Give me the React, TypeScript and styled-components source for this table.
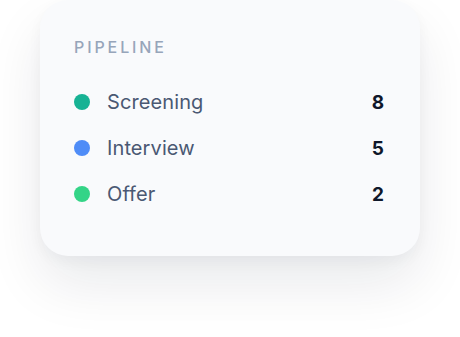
import React from 'react';
import styled, { createGlobalStyle } from 'styled-components';

const stages = [
  { label: 'Screening', count: 8, color: '#17b294' },
  { label: 'Interview', count: 5, color: '#4f8cf7' },
  { label: 'Offer', count: 2, color: '#34d487' },
];

const App: React.FC = () => (
  <Page>
    <GlobalStyle />
    <Card>
      <Title>Pipeline</Title>
      <List>
        {stages.map(s => (
          <Row key={s.label}>
            <Dot color={s.color} />
            <Label>{s.label}</Label>
            <Count>{s.count}</Count>
          </Row>
        ))}
      </List>
    </Card>
  </Page>
);

const GlobalStyle = createGlobalStyle`
  body {
    margin: 0;
    background: #ffffff;
    font-family: Inter, 'Noto Sans', sans-serif;
  }
`;

const Page = styled.div`
  min-height: 337px;
  padding: 0 40px;
`;

const Card = styled.div`
  box-sizing: border-box;
  width: 380px;
  height: 256px;
  padding: 36px 36px 0 34px;
  background: #f9fafc;
  border-radius: 28px;
  box-shadow: 0 28px 56px rgba(15, 23, 42, 0.09), 0 6px 14px rgba(15, 23, 42, 0.04);
`;

const Title = styled.div`
  font-size: 16px;
  line-height: 22px;
  font-weight: 500;
  letter-spacing: 2.9px;
  text-transform: uppercase;
  color: #97a5ba;
`;

const List = styled.div`
  margin-top: 21px;
  display: flex;
  flex-direction: column;
`;

const Row = styled.div`
  display: flex;
  align-items: center;
  height: 46px;
`;

const Dot = styled.span<{ color: string }>`
  width: 16px;
  height: 16px;
  border-radius: 50%;
  background: ${p => p.color};
  flex-shrink: 0;
`;

const Label = styled.span`
  flex: 1;
  margin-left: 17px;
  font-size: 20px;
  letter-spacing: 0.1px;
  color: #4a5873;
`;

const Count = styled.span`
  font-size: 19px;
  font-weight: 700;
  color: #0f172a;
`;

export default App;
